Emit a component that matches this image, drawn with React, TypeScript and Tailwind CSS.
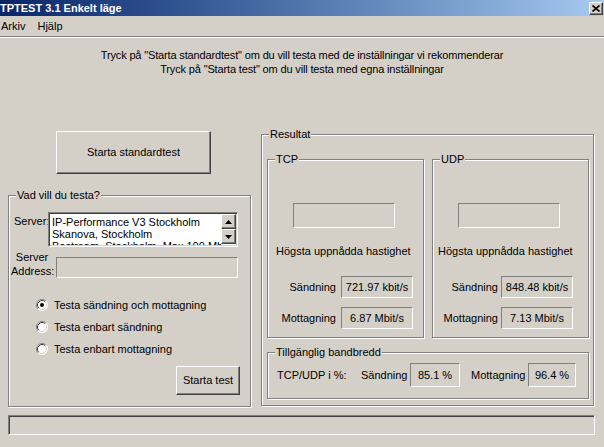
import React from "react";

const etched = "border border-[#808080] shadow-[inset_1px_1px_0_#ffffff,1px_1px_0_#ffffff]";
const sunken = "border border-t-[#808080] border-l-[#808080] border-b-white border-r-white";
const raised =
  "border border-t-white border-l-white border-b-[#404040] border-r-[#404040] shadow-[inset_-1px_-1px_0_#808080] bg-[#d4d0c8]";

function Group({
  title,
  className,
  children,
}: {
  title: string;
  className: string;
  children?: React.ReactNode;
}) {
  return (
    <fieldset className={`${etched} ${className}`}>
      <legend className="ml-[7px] px-[1px] leading-[14px] bg-[#d4d0c8]">{title}</legend>
      {children}
    </fieldset>
  );
}

function Radio({ checked }: { checked?: boolean }) {
  return (
    <svg width="12" height="12" viewBox="0 0 12 12" className="shrink-0">
      <circle cx="6" cy="6" r="5.5" fill="#ffffff" />
      <path d="M2.11 9.89 A5.5 5.5 0 0 1 9.89 2.11" fill="none" stroke="#808080" strokeWidth="1" />
      <path d="M9.89 2.11 A5.5 5.5 0 0 1 2.11 9.89" fill="none" stroke="#ffffff" strokeWidth="1" />
      <path d="M2.82 9.18 A4.5 4.5 0 0 1 9.18 2.82" fill="none" stroke="#404040" strokeWidth="1" />
      <path d="M9.18 2.82 A4.5 4.5 0 0 1 2.82 9.18" fill="none" stroke="#d4d0c8" strokeWidth="1" />
      {checked && <circle cx="6" cy="6" r="2" fill="#000000" />}
    </svg>
  );
}

function ScrollBtn({ up }: { up?: boolean }) {
  return (
    <div className={`${raised} w-[15px] h-[15px] flex items-center justify-center`}>
      <svg width="7" height="4" viewBox="0 0 7 4">
        {up ? <path d="M3.5 0 L7 4 L0 4 Z" fill="#000" /> : <path d="M0 0 L7 0 L3.5 4 Z" fill="#000" />}
      </svg>
    </div>
  );
}

export default function App() {
  return (
    <div className="w-[604px] h-[447px] bg-[#d4d0c8] text-black text-[11px] font-['Liberation_Sans',Arial,sans-serif] overflow-hidden flex flex-col">
      {/* Title bar */}
      <div className="h-[16px] shrink-0 flex items-center bg-gradient-to-r from-[#0a246a] to-[#a6caf0]">
        <span className="text-white font-bold text-[11px] leading-[16px] whitespace-nowrap">TPTEST 3.1 Enkelt läge</span>
        <div className={`${raised} ml-auto mr-[1px] w-[14px] h-[13px] flex items-center justify-center`}>
          <svg width="8" height="7" viewBox="0 0 8 7">
            <path d="M0.5 0.5 L7.5 6.5 M7.5 0.5 L0.5 6.5" stroke="#000" strokeWidth="1.6" />
          </svg>
        </div>
      </div>
      {/* Menu bar */}
      <div className="h-[20px] shrink-0 flex items-center">
        <span className="ml-[1px]">Arkiv</span>
        <span className="ml-[12px]">Hjälp</span>
      </div>
      <div className="h-[1px] shrink-0 bg-[#808080]" />
      <div className="h-[1px] shrink-0 bg-white" />

      {/* Intro */}
      <div className="h-[82px] shrink-0 pt-[10px] text-center leading-[14px] tracking-[-0.15px]">
        <div>Tryck på &quot;Starta standardtest&quot; om du vill testa med de inställningar vi rekommenderar</div>
        <div>Tryck på &quot;Starta test&quot; om du vill testa med egna inställningar</div>
      </div>

      {/* Main row */}
      <div className="flex items-start shrink-0">
        {/* Left column */}
        <div className="ml-[8px] w-[243px] flex flex-col">
          <button className={`${raised} mt-[11px] ml-[48px] w-[155px] h-[43px] text-[11px]`}>Starta standardtest</button>
          <Group title="Vad vill du testa?" className="mt-[14px] w-[243px] h-[219px]">
            <div className="flex items-start mt-[10px] pl-[5px]">
              <span className="w-[34px] mt-[2px] leading-[14px]">Server:</span>
              <div className="w-[190px] h-[35px] border border-t-[#808080] border-l-[#808080] border-b-white border-r-white shadow-[inset_1px_1px_0_#404040,inset_-1px_-1px_0_#d4d0c8] bg-white flex">
                <div className="flex-1 h-[32px] overflow-hidden pt-[3px] pl-[3px] leading-[12px] whitespace-nowrap text-[11px]">
                  <div>IP-Performance V3 Stockholm</div>
                  <div>Skanova, Stockholm</div>
                  <div>Bostream, Stockholm, Max 100 Mbit/s</div>
                </div>
                <div className="flex flex-col mt-[1px] mr-[1px]">
                  <ScrollBtn up />
                  <ScrollBtn />
                </div>
              </div>
            </div>
            <div className="flex items-start mt-[3px] pl-[2px]">
              <div className="w-[42px] text-center leading-[14px]">
                <div>Server</div>
                <div>Address:</div>
              </div>
              <div className={`${sunken} ml-[3px] mt-[7px] w-[182px] h-[21px]`} />
            </div>
            <div className="flex flex-col mt-[20px] pl-[27px] gap-[8px]">
              <div className="flex items-center gap-[6px] h-[14px]">
                <Radio checked />
                <span>Testa sändning och mottagning</span>
              </div>
              <div className="flex items-center gap-[6px] h-[14px]">
                <Radio />
                <span>Testa enbart sändning</span>
              </div>
              <div className="flex items-center gap-[6px] h-[14px]">
                <Radio />
                <span>Testa enbart mottagning</span>
              </div>
            </div>
            <button className={`${raised} mt-[10px] ml-[167px] w-[64px] h-[29px] text-[11px]`}>Starta test</button>
          </Group>
        </div>

        {/* Right column */}
        <Group title="Resultat" className="ml-[10px] mt-[7px] w-[333px] h-[279px]">
          <div className="flex mt-[11px] pl-[5px] gap-[8px]">
            <Group title="TCP" className="w-[157px] h-[186px]">
              <div className={`${sunken} mt-[37px] ml-[25px] w-[102px] h-[25px]`} />
              <div className="mt-[16px] pl-[8px] leading-[14px] whitespace-nowrap">Högsta uppnådda hastighet</div>
              <div className="flex items-center mt-[18px]">
                <span className="w-[68px] text-right whitespace-nowrap">Sändning</span>
                <div className={`${sunken} ml-[5px] w-[72px] h-[22px] flex items-center justify-center whitespace-nowrap`}>721.97 kbit/s</div>
              </div>
              <div className="flex items-center mt-[9px]">
                <span className="w-[68px] text-right whitespace-nowrap">Mottagning</span>
                <div className={`${sunken} ml-[5px] w-[72px] h-[22px] flex items-center justify-center whitespace-nowrap`}>6.87 Mbit/s</div>
              </div>
            </Group>
            <Group title="UDP" className="w-[157px] h-[186px]">
              <div className={`${sunken} mt-[37px] ml-[25px] w-[102px] h-[25px]`} />
              <div className="mt-[16px] pl-[5px] leading-[14px] whitespace-nowrap">Högsta uppnådda hastighet</div>
              <div className="flex items-center mt-[18px]">
                <span className="w-[65px] text-right whitespace-nowrap">Sändning</span>
                <div className={`${sunken} ml-[3px] w-[72px] h-[22px] flex items-center justify-center whitespace-nowrap`}>848.48 kbit/s</div>
              </div>
              <div className="flex items-center mt-[9px]">
                <span className="w-[65px] text-right whitespace-nowrap">Mottagning</span>
                <div className={`${sunken} ml-[3px] w-[72px] h-[22px] flex items-center justify-center whitespace-nowrap`}>7.13 Mbit/s</div>
              </div>
            </Group>
          </div>
          <Group title="Tillgänglig bandbredd" className="mt-[7px] ml-[5px] w-[322px] h-[54px]">
            <div className="flex items-center mt-[4px] pl-[9px]">
              <span className="w-[84px] whitespace-nowrap">TCP/UDP i %:</span>
              <span className="w-[44px] text-right whitespace-nowrap">Sändning</span>
              <div className={`${sunken} ml-[5px] w-[50px] h-[24px] flex items-center justify-center whitespace-nowrap`}>85.1 %</div>
              <span className="ml-[11px] w-[53px] text-right whitespace-nowrap">Mottagning</span>
              <div className={`${sunken} ml-[4px] w-[48px] h-[24px] flex items-center justify-center whitespace-nowrap`}>96.4 %</div>
            </div>
          </Group>
        </Group>
      </div>

      {/* Status bar */}
      <div className="mt-[8px] ml-[8px] w-[587px] h-[20px] shrink-0 border border-t-[#808080] border-l-[#808080] border-b-white border-r-white shadow-[inset_1px_1px_0_#404040,inset_-1px_-1px_0_#d4d0c8]" />
    </div>
  );
}
